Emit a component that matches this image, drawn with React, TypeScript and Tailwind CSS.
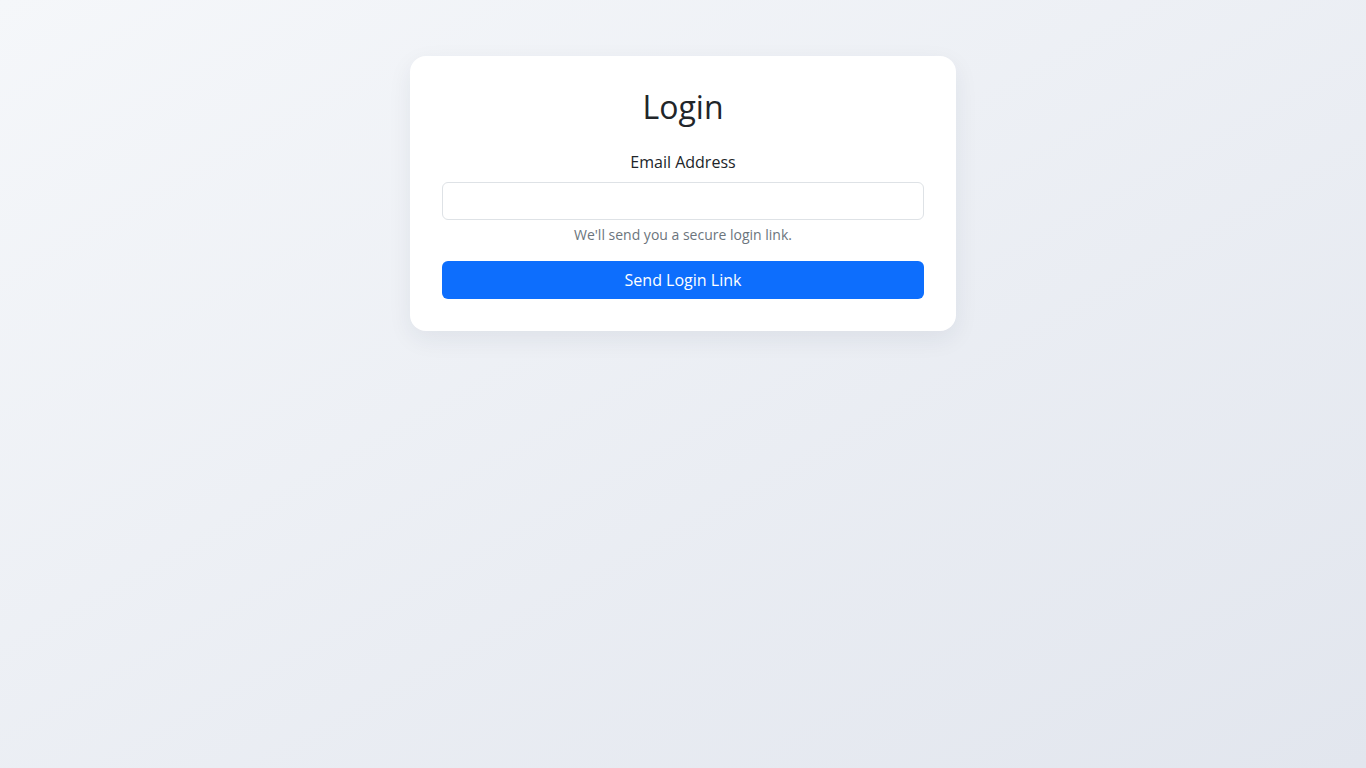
export default function App() {
  return (
    <div
      className="min-h-screen w-full bg-gradient-to-br from-[#f5f7fa] to-[#e2e6ee] pt-14 text-[#212529]"
      style={{ fontFamily: '"Open Sans", "Liberation Sans", sans-serif' }}
    >
      <div className="mx-auto w-[546px] rounded-[16px] bg-white p-8 shadow-[0_8px_24px_rgba(30,40,70,0.07)]">
        <h1 className="mb-6 text-center text-[32px] leading-[1.2] font-normal">Login</h1>
        <form className="flex flex-col" onSubmit={(e) => e.preventDefault()}>
          <label htmlFor="email" className="mb-2 text-center text-base leading-6">
            Email Address
          </label>
          <input
            id="email"
            type="email"
            className="h-[38px] w-full rounded-md border border-[#dee2e6] bg-white px-3 text-base outline-none"
          />
          <p className="mt-1 text-center text-sm leading-[21px] text-[#6c757d]">
            We'll send you a secure login link.
          </p>
          <button
            type="submit"
            className="mt-4 h-[38px] w-full rounded-md bg-[#0d6efd] text-base text-white"
          >
            Send Login Link
          </button>
        </form>
      </div>
    </div>
  );
}
